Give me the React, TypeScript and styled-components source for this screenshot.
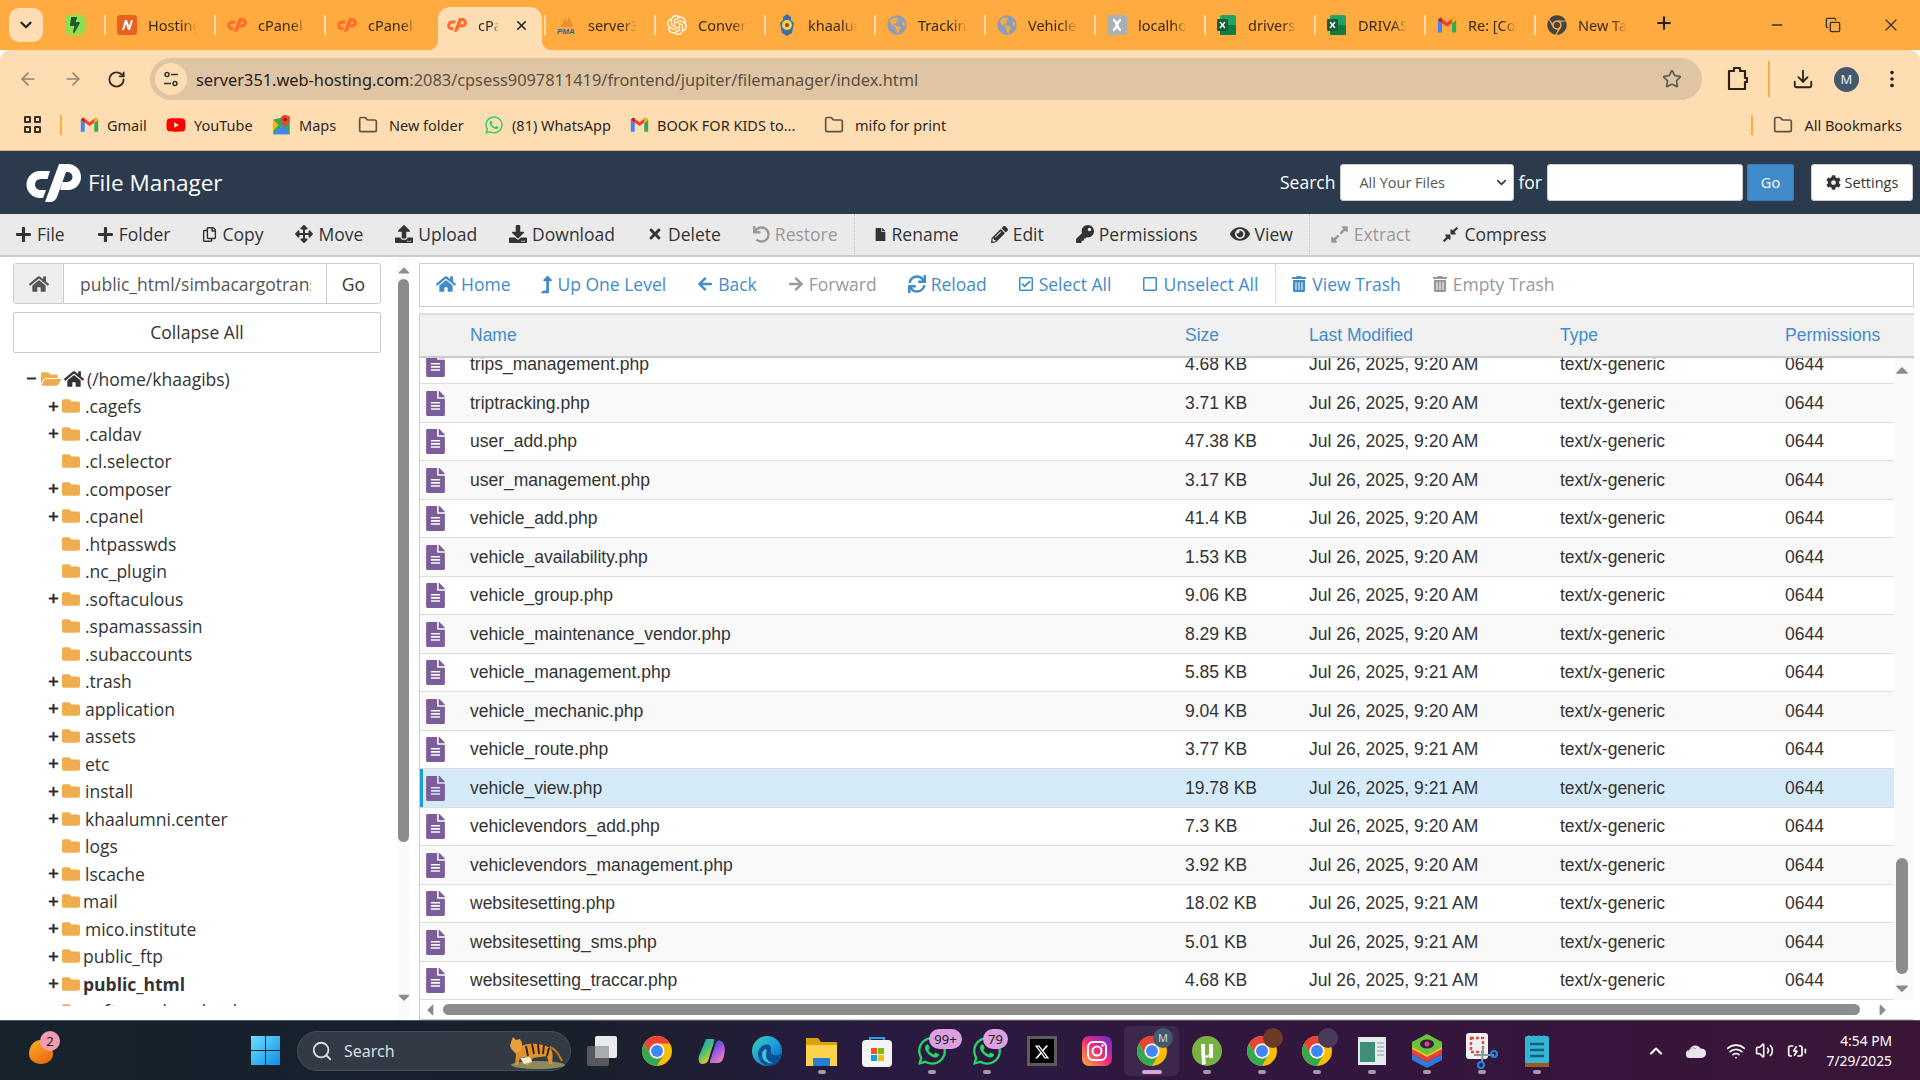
import { Fragment, ReactNode } from 'react';
import styled, { createGlobalStyle } from 'styled-components';
import {
    FaPlus, FaRegCopy, FaArrowsAlt, FaUpload, FaDownload, FaTimes, FaUndo, FaFile, FaPencilAlt, FaKey,
    FaEye, FaExpandAlt, FaCompressAlt, FaHome, FaLevelUpAlt, FaArrowLeft, FaArrowRight, FaSync,
    FaRegCheckSquare, FaRegSquare, FaTrashAlt, FaCog, FaFileAlt, FaFolder, FaFolderOpen, FaGlobeAmericas,
    FaChrome, FaWhatsapp, FaYoutube, FaBolt, FaCaretUp, FaCaretDown, FaCaretLeft, FaCaretRight,
} from 'react-icons/fa';
import { FaXTwitter } from 'react-icons/fa6';
import { SiOpenai } from 'react-icons/si';
import {
    ChevronDown, ChevronUp, ArrowLeft, ArrowRight, RotateCw, Star, Download, MoreVertical, Minus, X, Plus,
    Folder, Search, Wifi, Volume2, BatteryCharging, Copy as CopyIcon,
} from 'lucide-react';

//== data ==//
const OPEN = '"Open Sans", "Noto Sans", sans-serif';
const UI = '"Noto Sans", "Open Sans", sans-serif';
const ARIAL = '"Liberation Sans", Arial, sans-serif';

const files = [
    ['trips_management.php', '4.68 KB', '9:20'],
    ['triptracking.php', '3.71 KB', '9:20'],
    ['user_add.php', '47.38 KB', '9:20'],
    ['user_management.php', '3.17 KB', '9:20'],
    ['vehicle_add.php', '41.4 KB', '9:20'],
    ['vehicle_availability.php', '1.53 KB', '9:20'],
    ['vehicle_group.php', '9.06 KB', '9:20'],
    ['vehicle_maintenance_vendor.php', '8.29 KB', '9:20'],
    ['vehicle_management.php', '5.85 KB', '9:21'],
    ['vehicle_mechanic.php', '9.04 KB', '9:20'],
    ['vehicle_route.php', '3.77 KB', '9:21'],
    ['vehicle_view.php', '19.78 KB', '9:21'],
    ['vehiclevendors_add.php', '7.3 KB', '9:20'],
    ['vehiclevendors_management.php', '3.92 KB', '9:20'],
    ['websitesetting.php', '18.02 KB', '9:21'],
    ['websitesetting_sms.php', '5.01 KB', '9:21'],
    ['websitesetting_traccar.php', '4.68 KB', '9:21'],
];

const folders: [string, boolean, boolean?, boolean?][] = [
    ['.cagefs', true],
    ['.caldav', true],
    ['.cl.selector', false],
    ['.composer', true],
    ['.cpanel', true],
    ['.htpasswds', false],
    ['.nc_plugin', false],
    ['.softaculous', true],
    ['.spamassassin', false],
    ['.subaccounts', false],
    ['.trash', true],
    ['application', true],
    ['assets', true],
    ['etc', true],
    ['install', true],
    ['khaalumni.center', true],
    ['logs', false],
    ['lscache', true],
    ['mail', true, true],
    ['mico.institute', true],
    ['public_ftp', true, true],
    ['public_html', true, true, true],
    ['softwaredownload', true],
];

//== style ==//
const Global = createGlobalStyle`
    html, body { margin: 0; width: 1920px; height: 1080px; overflow: hidden; background: #fff; }
    * { box-sizing: border-box; }
`;

const Screen = styled.div`
    width: 1920px;
    height: 1080px;
    display: flex;
    flex-direction: column;
    overflow: hidden;
    font-family: ${OPEN};
    color: #333;
`;

// spacing around a single glyph in a row
const Spaced = styled.span<{ $ml?: number; $mr?: number; $mt?: number }>`
    display: flex;
    flex: none;
    margin: ${p => p.$mt || 0}px ${p => p.$mr || 0}px 0 ${p => p.$ml || 0}px;
`;

const TabStrip = styled.div`
    height: 50px;
    flex: none;
    background: #ffab40;
    display: flex;
    align-items: flex-end;
    padding-left: 9px;
`;

const TabMenu = styled.div`
    width: 34px;
    height: 34px;
    margin-bottom: 8px;
    border-radius: 10px;
    background: #ffddb3;
    display: flex;
    align-items: center;
    justify-content: center;
    color: #222;
`;

const PinnedTab = styled.div`
    width: 61px;
    height: 50px;
    padding: 15px 0 0 22px;
    position: relative;
`;

const PinnedGlyph = styled(FaBolt)`
    color: #1d5b2c;
    background: #8ee04e;
    border-radius: 5px;
    padding: 2px;
`;

const Tab = styled.div<{ $active?: boolean }>`
    width: ${p => p.$active ? 104 : 110}px;
    height: 43px;
    flex: none;
    margin: ${p => p.$active ? '0 2px 0 4px' : '0'};
    display: flex;
    align-items: center;
    padding: 0 0 7px ${p => p.$active ? 9 : 13}px;
    gap: 11px;
    position: relative;
    font-family: ${UI};
    font-size: 14.5px;
    color: #3a2a14;
    background: ${p => p.$active ? '#ffddb3' : 'transparent'};
    border-radius: ${p => p.$active ? '12px 12px 0 0' : '0'};

    &:before {
        content: '';
        position: absolute;
        ${p => p.$active ? `
            left: -10px;
            bottom: 0;
            width: 10px;
            height: 10px;
            background: radial-gradient(circle at 0 0, transparent 10px, #ffddb3 10.5px);
        ` : `
            left: 0;
            top: 8px;
            height: 20px;
            border-left: 2px solid #ffd9a6;
        `}
    }

    ${p => p.$active && `
        &:after {
            content: '';
            position: absolute;
            right: -10px;
            bottom: 0;
            width: 10px;
            height: 10px;
            background: radial-gradient(circle at 100% 0, transparent 10px, #ffddb3 10.5px);
        }
    `}
`;

const TabTitle = styled.span<{ $width: number }>`
    width: ${p => p.$width}px;
    overflow: hidden;
    white-space: nowrap;
    mask-image: linear-gradient(90deg, #000 70%, transparent);
`;

const NewTab = styled.div`
    width: 32px;
    height: 43px;
    padding: 6px 0 0 10px;
    color: #222;
`;

const WindowButtons = styled.div`
    margin-left: auto;
    height: 50px;
    display: flex;
    align-items: center;
    gap: 40px;
    padding-right: 19px;
    color: #333;
`;

const AddressRow = styled.div`
    height: 50px;
    flex: none;
    background: #ffddb3;
    border-radius: 10px 10px 0 0;
    display: flex;
    align-items: center;
    padding: 8px 0 0 18px;
    color: #47392a;
`;

const NavGlyph = styled.span<{ $dim?: boolean }>`
    width: 44.5px;
    display: flex;
    color: ${p => p.$dim ? '#8f8474' : '#3b3026'};
`;

const Omnibox = styled.div`
    width: 1552px;
    height: 42px;
    margin-left: -1.500px;
    border-radius: 21px;
    background: #dfc5a3;
    display: flex;
    align-items: center;
    padding-left: 5px;
`;

const SiteBadge = styled.span`
    width: 32px;
    height: 32px;
    border-radius: 50%;
    background: #ffddb3;
    display: flex;
    align-items: center;
    justify-content: center;
    margin-right: 9px;
    color: #333;
`;

const Url = styled.div`
    flex: 1;
    padding-top: 1px;
    font-family: ${UI};
    font-size: 16.35px;
    color: #5c5040;
    white-space: nowrap;

    b { font-weight: 400; color: #26201a; }
`;

const ToolGlyphs = styled.div`
    flex: 1;
    display: flex;
    align-items: center;
    padding-left: 24px;
    color: #2a2219;
`;

const Avatar = styled.span`
    width: 25px;
    height: 25px;
    border-radius: 50%;
    background: #44596b;
    color: #e8eef2;
    font-family: ${UI};
    font-size: 13px;
    display: flex;
    align-items: center;
    justify-content: center;
`;

const VBar = styled.span<{ $h: number; $mx?: string }>`
    width: 2px;
    height: ${p => p.$h}px;
    background: #ffab40;
    margin: ${p => p.$mx || '0'};
    flex: none;
`;

const BookmarkRow = styled.div`
    height: 51px;
    flex: none;
    background: #ffddb3;
    display: flex;
    align-items: center;
    padding: 0 18px 1px 24px;
    font-family: ${UI};
    font-size: 14.5px;
    color: #2f261b;
    border-bottom: 1px solid #cdb48f;
`;

const Bookmark = styled.div<{ $w?: number; $gap?: number; $ml?: number }>`
    width: ${p => p.$w ? `${p.$w}px` : 'auto'};
    margin-left: ${p => p.$ml || 0}px;
    flex: none;
    display: flex;
    align-items: center;
    gap: ${p => p.$gap || 8}px;
    white-space: nowrap;
`;

const AppsGrid = styled.div`
    width: 17px;
    height: 17px;
    display: grid;
    grid-template-columns: 7px 7px;
    gap: 3px;
    span { border: 2px solid #3b3026; border-radius: 1px; }
`;

const PageHeader = styled.header`
    height: 63px;
    flex: none;
    background: #2b3b4d;
    color: #fff;
    display: flex;
    align-items: center;
    padding: 0 7px 0 26px;
`;

const Brand = styled.div`
    display: flex;
    align-items: center;
    gap: 7px;
    font-size: 22.5px;
    flex: 1;
`;

const SearchLabel = styled.span<{ $ml: number; $mr: number }>`
    font-size: 17.5px;
    margin: -2px ${p => p.$mr}px 0 ${p => p.$ml}px;
`;

const SelectBox = styled.div`
    width: 174px;
    height: 37px;
    background: #fff;
    border: 1px solid #ccc;
    border-radius: 3px;
    color: #555;
    font-size: 14.5px;
    display: flex;
    align-items: center;
    justify-content: space-between;
    padding: 0 4px 0 18px;
`;

const SearchInput = styled.div`
    width: 196px;
    height: 37px;
    background: #fff;
    border: 1px solid #ccc;
    border-radius: 3px;
`;

const GoButton = styled.div`
    width: 47px;
    height: 37px;
    margin: 0 17px 0 4px;
    background: #428bca;
    border: 1px solid #357ebd;
    border-radius: 2px;
    font-size: 14.5px;
    display: flex;
    align-items: center;
    justify-content: center;
`;

const SettingsButton = styled.div`
    width: 102px;
    height: 37px;
    background: #fff;
    border: 1px solid #ccc;
    border-radius: 3px;
    color: #333;
    font-size: 14.5px;
    display: flex;
    align-items: center;
    justify-content: center;
    gap: 4px;
`;

const ActionBar = styled.nav`
    height: 43px;
    flex: none;
    background: #eaeaea;
    border-bottom: 2px solid #ccc;
    display: flex;
    align-items: center;
    padding: 0 0 1px 15px;
    font-size: 17.5px;
`;

const Action = styled.div<{ $off?: boolean; $blue?: boolean }>`
    display: flex;
    align-items: center;
    gap: 5px;
    margin-right: ${p => p.$blue ? 31 : 32}px;
    white-space: nowrap;
    color: ${p => p.$off ? '#999' : p.$blue ? '#428bca' : '#333'};
`;

const Divider = styled.span<{ $ml: number; $mr: number }>`
    align-self: stretch;
    border-left: 1px dotted #c4c4c4;
    margin: 0 ${p => p.$mr}px 0 ${p => p.$ml}px;
`;

const LevelUpGlyph = styled(FaLevelUpAlt)`
    width: 11px;
    height: 19px;
`;

const Workspace = styled.main`
    flex: 1;
    min-height: 0;
    display: flex;
    background: #fff;
`;

const Sidebar = styled.aside`
    width: 419px;
    flex: none;
    display: flex;
    background: #fff;
`;

const SideColumn = styled.div`
    width: 398px;
    padding: 6px 0 0 13px;
    display: flex;
    flex-direction: column;
`;

const PathGroup = styled.div`
    width: 368px;
    height: 41px;
    flex: none;
    display: flex;
    border: 1px solid #ccc;
    border-radius: 3px;
    font-size: 17.5px;
`;

const PathHome = styled.div`
    width: 50px;
    background: #eee;
    border-right: 1px solid #ccc;
    display: flex;
    align-items: center;
    justify-content: center;
    color: #555;
`;

const PathInput = styled.div`
    width: 263px;
    padding: 0 16px;
    color: #555;
    line-height: 40px;
    overflow: hidden;
    white-space: nowrap;
    border-right: 1px solid #ccc;

    span { display: block; width: 231px; overflow: hidden; }
`;

const PathGo = styled.div`
    flex: 1;
    text-align: center;
    line-height: 40px;
`;

const CollapseButton = styled.div`
    width: 368px;
    height: 41px;
    flex: none;
    margin-top: 8px;
    border: 1px solid #ccc;
    border-radius: 2px;
    font-size: 17.5px;
    text-align: center;
    line-height: 38px;
`;

const Tree = styled.div`
    height: 641px;
    margin-top: 12px;
    overflow: hidden;
    font-size: 17.5px;
`;

const TreeRow = styled.div<{ $bold?: boolean }>`
    height: 27.5px;
    display: flex;
    align-items: center;
    font-weight: ${p => p.$bold ? 700 : 400};
    white-space: nowrap;
    color: #333;
`;

const Expander = styled.span`
    width: 49px;
    padding-left: 35px;
    display: flex;
    flex: none;
    color: #2c2c2c;
`;

const FolderGlyph = styled(FaFolder)`
    color: #f0ad4e;
    flex: none;
`;

const TreeLabel = styled.span<{ $tight?: boolean }>`
    margin-left: ${p => p.$tight ? 3 : 5}px;
`;

const RootRow = styled(TreeRow)`
    padding-left: 12px;
    gap: 3px;
`;

const VScroll = styled.div<{ $top: number; $bottom: number; $width: number; $pr?: number }>`
    width: ${p => p.$width}px;
    flex: none;
    display: flex;
    flex-direction: column;
    align-items: center;
    justify-content: space-between;
    padding: ${p => p.$top}px ${p => p.$pr || 0}px ${p => p.$bottom}px 0;
    color: #8c8c8c;
    background: #fafafa;
`;

const VThumb = styled.div<{ $mt: number; $h: number; $w?: number }>`
    width: ${p => p.$w || 11}px;
    height: ${p => p.$h}px;
    margin-top: ${p => p.$mt}px;
    margin-bottom: auto;
    border-radius: 6px;
    background: #8c8c8c;
`;

const FilePane = styled.section`
    width: 1495px;
    flex: none;
    padding-top: 6px;
    display: flex;
    flex-direction: column;
`;

const NavBar = styled.nav`
    height: 44px;
    flex: none;
    border: 1px solid #ccc;
    display: flex;
    align-items: center;
    padding: 0 0 2px 16px;
    font-size: 17.5px;
`;

const TableBox = styled.div`
    margin-top: 6px;
    flex: 1;
    min-height: 0;
    border: 1px solid #ccc;
    border-top: 2px solid #ddd;
    border-right: 0;
    display: flex;
    flex-direction: column;
`;

const Cols = styled.div`
    display: grid;
    grid-template-columns: 50px 715px 124px 251px 225px 1fr;
    align-items: center;
`;

const HeadRow = styled(Cols)`
    height: 43px;
    flex: none;
    background: #f1f1f1;
    border-bottom: 2px solid #ccc;
    color: #428bca;
    font-family: ${ARIAL};
    font-size: 17.5px;
`;

const TableMiddle = styled.div`
    height: 642px;
    flex: none;
    display: flex;
    overflow: hidden;
`;

const Rows = styled.div`
    width: 1474px;
    flex: none;
    overflow: hidden;
`;

const RowsInner = styled.div`
    margin-top: -12.25px;
`;

const FileRow = styled(Cols)<{ $alt: boolean; $selected: boolean }>`
    height: 38.5px;
    font-family: ${ARIAL};
    font-size: 17.5px;
    color: #333;
    border-bottom: 1.5px solid #ddd;
    background: ${p => p.$selected ? '#d6ebf9' : p.$alt ? '#f9f9f9' : '#fff'};
    box-shadow: ${p => p.$selected ? 'inset 3px 0 0 #1a9fd9' : 'none'};
    white-space: nowrap;
`;

const FileGlyph = styled(FaFileAlt)`
    color: #7c5d99;
    margin-left: 3px;
`;

const HScroll = styled.div`
    height: 15px;
    flex: none;
    margin-top: 2px;
    display: flex;
    align-items: center;
    color: #8c8c8c;
    padding-left: 1px;
`;

const HThumb = styled.div`
    width: 1417px;
    height: 11px;
    margin: 0 14px 0 4px;
    border-radius: 6px;
    background: #8c8c8c;
`;

const Taskbar = styled.footer`
    height: 60px;
    flex: none;
    border-top: 1px solid #555;
    background: linear-gradient(90deg, #17222d 0%, #18202c 30%, #2a1a40 46%, #33163d 70%, #3a1538 100%);
    display: flex;
    align-items: center;
    padding-left: 29px;
    color: #fff;
    position: relative;
`;

const Widget = styled.div`
    width: 24px;
    height: 24px;
    margin: 3px 198px 0 0;
    border-radius: 50% 50% 50% 50% / 60% 60% 45% 45%;
    background: linear-gradient(150deg, #f5b324, #ee5f0c);
    position: relative;
`;

const CountBadge = styled.span<{ $bg: string; $w: number; $r: number; $t: number }>`
    position: absolute;
    top: ${p => p.$t}px;
    right: ${p => p.$r}px;
    min-width: ${p => p.$w}px;
    height: 20px;
    border-radius: 10px;
    background: ${p => p.$bg};
    color: #1c1c1c;
    font-family: ${UI};
    font-size: 13px;
    line-height: 20px;
    text-align: center;
`;

const SearchPill = styled.div`
    width: 274px;
    height: 40px;
    margin-left: 17px;
    border-radius: 20px;
    background: #323b45;
    border: 1px solid #454d57;
    display: flex;
    align-items: center;
    padding-left: 13px;
    gap: 11px;
    font-family: ${UI};
    font-size: 16px;
    color: #d8dde2;
`;

const TigerSlot = styled.span`
    display: flex;
    margin: 0 5px 0 auto;
`;

const TaskSlot = styled.div<{ $active?: boolean; $mark?: boolean }>`
    width: 55px;
    height: 50px;
    flex: none;
    display: flex;
    align-items: center;
    justify-content: center;
    position: relative;
    border-radius: 6px;
    background: ${p => p.$active ? 'rgba(255,255,255,.07)' : 'transparent'};

    &:after {
        display: ${p => p.$mark || p.$active ? 'block' : 'none'};
        content: '';
        position: absolute;
        bottom: 2px;
        left: 50%;
        transform: translateX(-50%);
        width: ${p => p.$active ? 20 : 8}px;
        height: 4px;
        border-radius: 2px;
        background: ${p => p.$active ? '#dba0e0' : '#a29aa6'};
    }
`;

const TaskIcons = styled.div`
    display: flex;
    align-items: center;
    margin-left: 3px;
`;

const Tray = styled.div`
    display: flex;
    align-items: center;
    margin-left: 82px;
    color: #fff;
`;

const Clock = styled.div`
    margin-left: 5px;
    font-family: ${UI};
    font-size: 13.8px;
    line-height: 20px;
    text-align: right;
    width: 80px;
    white-space: nowrap;
`;

const OverAvatar = styled.span<{ $bg: string }>`
    position: absolute;
    top: 2px;
    right: 6px;
    width: 20px;
    height: 20px;
    border-radius: 50%;
    background: ${p => p.$bg};
    color: #cfd6da;
    font-family: ${UI};
    font-size: 11px;
    line-height: 20px;
    text-align: center;
`;

//== icons ==//
const LogoSvg = styled.svg`
    flex: none;
`;

const CpLogo = ({ width, color }: { width: number; color: string }) => (
    <LogoSvg width={width} height={width * 38 / 55} viewBox="0 0 55 38">
        <path fill={color} d="M24 7H14A13.500 13.500 0 0 0 14 34H17L20 26H14.500A5.500 5.500 0 0 1 14.500 15H21.500Z" />
        <path fill={color} d="M33 0H42A13 13 0 0 1 42 26H34L36.500 18H41.500A5 5 0 0 0 41.500 8H40L31 33Q29 38 24 38H19Z" />
    </LogoSvg>
);

const ChromeLogo = ({ size = 20 }: { size?: number }) => (
    <svg width={size} height={size} viewBox="4 4 40 40">
        <circle cx="24" cy="24" r="20" fill="#fbbc04" />
        <path fill="#ea4335" d="M24 4A20 20 0 0 1 41.32 14H24A10 10 0 0 0 15.34 29L6.68 14A20 20 0 0 1 24 4Z" />
        <path fill="#34a853" d="M6.68 14L15.34 29A10 10 0 0 0 32.66 29L24 44A20 20 0 0 1 6.68 14Z" />
        <circle cx="24" cy="24" r="10" fill="#fff" />
        <circle cx="24" cy="24" r="8" fill="#4285f4" />
    </svg>
);

const GmailLogo = ({ size = 19 }: { size?: number }) => (
    <svg width={size} height={size} viewBox="0 0 24 24">
        <path fill="#4285f4" d="M1 6v15h5V10z" />
        <path fill="#34a853" d="M18 10v11h5V6z" />
        <path fill="#ea4335" d="M1 6l11 8 11-8-3-3-8 6-8-6-3 3z" />
        <path fill="#fbbc04" d="M18 5l2-2 3 3-5 4z" />
        <path fill="#c5221f" d="M1 6l3-3 2 2v5z" />
    </svg>
);

const MapsLogo = () => (
    <svg width="19" height="22" viewBox="0 0 20 24">
        <path fill="#34a853" d="M1 6l18-4v20L1 22z" />
        <path fill="#4285f4" d="M1 22l10-10 8 10z" />
        <path fill="#fbbc04" d="M1 6l6 6-6 6z" />
        <path fill="#ea4335" d="M14 1a5 5 0 0 0-5 5c0 3.500 5 8 5 8s5-4.500 5-8a5 5 0 0 0-5-5z" />
        <circle cx="14" cy="6" r="1.800" fill="#8e1f16" />
    </svg>
);

const ExcelLogo = () => (
    <svg width="20" height="20" viewBox="0 0 20 20">
        <rect x="3" y="0" width="16" height="20" rx="2" fill="#21a366" />
        <rect x="3" y="10" width="16" height="10" rx="1" fill="#107c41" />
        <rect x="0" y="4" width="11" height="12" rx="1" fill="#185c37" />
        <path d="M3 7l5 6M8 7l-5 6" stroke="#fff" strokeWidth="1.400" />
    </svg>
);

const NamecheapIcon = () => (
    <svg width="20" height="20" viewBox="0 0 20 20">
        <rect width="20" height="20" rx="3" fill="#e8611f" />
        <path d="M5 15l3-10h2l2 6 2-6h2l-3 10h-2l-2-6-2 6z" fill="#fff" />
    </svg>
);

const PmaIcon = () => (
    <svg width="20" height="20" viewBox="0 0 20 20">
        <path d="M4 12l4-9 2 5 2-7 4 11z" fill="#f08c2e" />
        <text x="0" y="19" fontSize="8" fontWeight="700" fontStyle="italic" fill="#2e5f9e" fontFamily="Liberation Sans">PMA</text>
    </svg>
);

const CrestIcon = () => (
    <svg width="20" height="22" viewBox="0 0 20 22">
        <path d="M10 0l4 3v3l3 3-2 10-5 3-5-3-2-10 3-3V3z" fill="#3d6fa8" />
        <circle cx="10" cy="11" r="5" fill="#f2d34a" />
        <circle cx="10" cy="11" r="2" fill="#a33a2a" />
    </svg>
);

const XamppIcon = () => (
    <svg width="20" height="20" viewBox="0 0 20 20">
        <rect width="20" height="20" rx="3" fill="#aab0b4" />
        <path d="M6 5c4 0 4 10 8 10M14 5c-4 0-4 10-8 10" stroke="#fff" strokeWidth="2.500" fill="none" />
    </svg>
);

const SitePrefs = () => (
    <svg width="18" height="18" viewBox="0 0 18 18" fill="none" stroke="#333" strokeWidth="1.500">
        <circle cx="5" cy="4.500" r="2" />
        <path d="M9 4.500h7M2 13.500h7" />
        <circle cx="13" cy="13.500" r="2" />
    </svg>
);

const ExtensionGlyph = () => (
    <svg width="22" height="26" viewBox="0 0 22 26" fill="none" stroke="#2a2219" strokeWidth="2.200">
        <path d="M3 5h5V2h6v3h5v7h2v4h-2v7H3z" strokeLinejoin="round" />
    </svg>
);

const WindowsLogo = () => (
    <svg width="29" height="29" viewBox="0 0 29 29">
        <defs>
            <linearGradient id="win" x1="0" y1="0" x2="1" y2="1">
                <stop offset="0" stopColor="#6ce0fb" />
                <stop offset="1" stopColor="#0f8fe8" />
            </linearGradient>
        </defs>
        <path fill="url(#win)" d="M0 0h14v14H0zM15 0h14v14H15zM0 15h14v14H0zM15 15h14v14H15z" />
    </svg>
);

const Tiger = () => (
    <svg width="57" height="38" viewBox="0 0 57 38">
        <ellipse cx="30" cy="33" rx="27" ry="4" fill="#8d8a5c" />
        <path d="M10 16c6-5 22-6 32 0 3 3 3 8 2 16h-3l-2-8-14 2-4 7h-3l-1-8-5 1-2 7H7l1-11-3-3z" fill="#e2902a" />
        <path d="M3 10l2-5 3 3 4-1 2 4 0 5-4 5-6-3-2-4z" fill="#e8a13b" />
        <path d="M42 15c6 2 9 8 12 14" stroke="#c9771d" strokeWidth="2" fill="none" />
        <path d="M18 14l2 10M24 12l2 10M30 12l1 10M36 13l-1 9M41 16l-2 8" stroke="#2a1c10" strokeWidth="1.800" />
        <path d="M12 26l10-1 2 5-8 2z" fill="#f4ead8" />
    </svg>
);

const TaskView = () => (
    <svg width="30" height="30" viewBox="0 0 30 30">
        <rect x="0" y="10" width="22" height="20" rx="2" fill="#57595c" />
        <rect x="8" y="0" width="22" height="22" rx="2" fill="#e9eaec" />
        <rect x="8" y="10" width="14" height="12" fill="#a9abae" />
    </svg>
);

const Copilot = () => (
    <svg width="30" height="30" viewBox="0 0 30 30">
        <defs>
            <linearGradient id="cpa" x1="0" y1="0" x2=".6" y2="1">
                <stop offset="0" stopColor="#1f8fe8" />
                <stop offset=".5" stopColor="#3fc07a" />
                <stop offset="1" stopColor="#f7c81e" />
            </linearGradient>
            <linearGradient id="cpb" x1=".2" y1="0" x2=".8" y2="1">
                <stop offset="0" stopColor="#1c4fd8" />
                <stop offset=".5" stopColor="#a65ae0" />
                <stop offset="1" stopColor="#f28aa8" />
            </linearGradient>
        </defs>
        <path fill="url(#cpb)" d="M13 27h8c3 0 5-3 6-7 1-4 2-12-3-15-2-2-5 0-6 4l-4 13c-1 2-1 5-1 5z" />
        <path fill="url(#cpa)" d="M9 3h7c2 0 1 3 0 6l-5 16c-1 2-3 3-6 3-3 0-4-4-3-8z" />
    </svg>
);

const EdgeLogo = () => (
    <svg width="30" height="30" viewBox="0 0 30 30">
        <defs>
            <linearGradient id="edg" x1="0" y1="0" x2="1" y2="1">
                <stop offset="0" stopColor="#36d6a8" />
                <stop offset=".5" stopColor="#1b9de2" />
                <stop offset="1" stopColor="#0c59a4" />
            </linearGradient>
        </defs>
        <circle cx="15" cy="15" r="15" fill="url(#edg)" />
        <path d="M30 17c-2 3-8 3-10 1-3-3 1-7-3-9-5-2-11 3-11 9 0 6 5 12 12 12 6 0 11-5 12-13z" fill="#0f4f96" />
        <path d="M14 13c-4 1-5 6-3 10 2 3 6 5 10 4-4-1-7-4-7-7 0-2 1-5 0-7z" fill="#3cc8d8" />
    </svg>
);

const ExplorerLogo = () => (
    <svg width="31" height="30" viewBox="0 0 31 30">
        <path d="M0 2h12l3 4h16v24H0z" fill="#d9a20b" />
        <path d="M0 9h31v21H0z" fill="#fcd34d" />
        <rect x="7" y="22" width="17" height="8" rx="1" fill="#1f7fd4" />
    </svg>
);

const StoreLogo = () => (
    <svg width="30" height="32" viewBox="0 0 30 32">
        <path d="M8 7V3h14v4" fill="none" stroke="#27a2e8" strokeWidth="2" />
        <rect y="5" width="30" height="27" rx="4" fill="#f4f4f4" />
        <rect x="9" y="13" width="6" height="6" fill="#f25022" />
        <rect x="16" y="13" width="6" height="6" fill="#7fba00" />
        <rect x="9" y="20" width="6" height="6" fill="#00a4ef" />
        <rect x="16" y="20" width="6" height="6" fill="#ffb900" />
    </svg>
);

const InstaLogo = () => (
    <svg width="30" height="30" viewBox="0 0 30 30">
        <defs>
            <linearGradient id="ig" x1="0" y1="1" x2="1" y2="0">
                <stop offset="0" stopColor="#fdb131" />
                <stop offset=".5" stopColor="#ee2a7b" />
                <stop offset="1" stopColor="#6228d7" />
            </linearGradient>
        </defs>
        <rect width="30" height="30" rx="7" fill="url(#ig)" />
        <rect x="6" y="6" width="18" height="18" rx="5" fill="none" stroke="#fff" strokeWidth="2" />
        <circle cx="15" cy="15" r="4.500" fill="none" stroke="#fff" strokeWidth="2" />
        <circle cx="20.500" cy="9.500" r="1.200" fill="#fff" />
    </svg>
);

const TorrentLogo = () => (
    <svg width="30" height="30" viewBox="0 0 30 30">
        <circle cx="15" cy="15" r="15" fill="#78b13f" />
        <path d="M9 8h4v10c0 2 3 2 4 0V8h4v14h-4v-2c-1 2-3 2-4 1l1 7-4 1z" fill="#fff" />
    </svg>
);

const PreviewLogo = () => (
    <svg width="28" height="28" viewBox="0 0 28 28">
        <rect width="28" height="28" fill="#e6eaea" />
        <rect x="2" y="5" width="15" height="20" fill="#3f8f78" />
        <path d="M19 6h7M19 10h7M19 14h7M19 18h7" stroke="#aab5b3" strokeWidth="1.500" />
    </svg>
);

const BlueStacks = () => (
    <svg width="30" height="34" viewBox="0 0 30 34">
        <path d="M15 34L0 26v-6l15 8 15-8v6z" fill="#2c7bdc" />
        <path d="M15 28L0 20v-6l15 8 15-8v6z" fill="#e83d3d" />
        <path d="M15 23L0 15V9l15 8 15-8v6z" fill="#f7c325" />
        <path d="M15 0l15 8v5l-15 8L0 13V8z" fill="#6cc23a" />
        <ellipse cx="15" cy="10" rx="7" ry="4.500" fill="#33203f" />
        <circle cx="15" cy="10" r="2.500" fill="#d93f9c" />
    </svg>
);

const SnipLogo = () => (
    <svg width="32" height="36" viewBox="0 0 32 36">
        <rect width="22" height="26" rx="3" fill="#eef0f2" />
        <path d="M5 5h12v14H5z" fill="none" stroke="#dd4b39" strokeWidth="2.400" strokeDasharray="3 2" />
        <path d="M17 14l-1 16M8 22l20 0" stroke="#8f979d" strokeWidth="2" />
        <circle cx="15" cy="32" r="3" fill="none" stroke="#1c86e0" strokeWidth="2" />
        <circle cx="28" cy="21" r="3" fill="none" stroke="#1c86e0" strokeWidth="2" />
    </svg>
);

const NotepadLogo = () => (
    <svg width="24" height="32" viewBox="0 0 24 32">
        <rect y="1" width="24" height="28" rx="2" fill="#33b6d6" />
        <rect y="28" width="24" height="4" fill="#9c5a1e" />
        <path d="M4 1V0M9 1V0M14 1V0M19 1V0" stroke="#1a6e88" strokeWidth="2" />
        <path d="M5 9h14M5 15h14M5 21h14" stroke="#105e78" strokeWidth="2.400" />
    </svg>
);

const CloudLogo = () => (
    <svg width="20" height="14" viewBox="0 0 20 14">
        <path d="M4 14a4 4 0 0 1-.5-8 6 6 0 0 1 11-1.500A4.500 4.500 0 0 1 16 14z" fill="#e8e6ea" />
        <path d="M2 8a5 5 0 0 1 8-3" fill="none" stroke="#9f96a3" strokeWidth="1" />
    </svg>
);

function XBox() {
    return (
        <svg width="30" height="30" viewBox="0 0 30 30">
            <rect width="30" height="30" fill="#5c5c5c" />
            <rect x="3" y="3" width="24" height="24" fill="#000" />
            <foreignObject x="7" y="7" width="16" height="16"><FaXTwitter size={16} color="#fff" /></foreignObject>
        </svg>
    );
}

//== component ==//
const tabs: { icon: ReactNode; title: string; active?: boolean }[] = [
    { icon: <NamecheapIcon />, title: 'Hosting' },
    { icon: <CpLogo width={20} color="#ff6c2c" />, title: 'cPanel - ' },
    { icon: <CpLogo width={20} color="#ff6c2c" />, title: 'cPanel F' },
    { icon: <CpLogo width={20} color="#ff6c2c" />, title: 'cPa', active: true },
    { icon: <PmaIcon />, title: 'server351' },
    { icon: <SiOpenai size={20} color="#fff" />, title: 'Convers' },
    { icon: <CrestIcon />, title: 'khaalun' },
    { icon: <FaGlobeAmericas size={20} color="#8e9db5" />, title: 'Tracking' },
    { icon: <FaGlobeAmericas size={20} color="#8e9db5" />, title: 'Vehicle' },
    { icon: <XamppIcon />, title: 'localhost' },
    { icon: <ExcelLogo />, title: 'drivers_' },
    { icon: <ExcelLogo />, title: 'DRIVAS' },
    { icon: <GmailLogo size={20} />, title: 'Re: [Coc' },
    { icon: <FaChrome size={20} color="#444" />, title: 'New Tab' },
];

const actions: { icon: ReactNode; label: string; off?: boolean; split?: [number, number] }[] = [
    { icon: <FaPlus size={17} />, label: 'File' },
    { icon: <FaPlus size={17} />, label: 'Folder' },
    { icon: <FaRegCopy size={15} />, label: 'Copy' },
    { icon: <FaArrowsAlt size={18} />, label: 'Move' },
    { icon: <FaUpload size={18} />, label: 'Upload' },
    { icon: <FaDownload size={18} />, label: 'Download' },
    { icon: <FaTimes size={16} />, label: 'Delete' },
    { icon: <FaUndo size={17} />, label: 'Restore', off: true, split: [-16, 19] },
    { icon: <FaFile size={13} />, label: 'Rename' },
    { icon: <FaPencilAlt size={17} />, label: 'Edit' },
    { icon: <FaKey size={18} />, label: 'Permissions' },
    { icon: <FaEye size={20} />, label: 'View', split: [-16, 20] },
    { icon: <FaExpandAlt size={19} />, label: 'Extract', off: true },
    { icon: <FaCompressAlt size={17} />, label: 'Compress' },
];

const navItems: { icon: ReactNode; label: string; off?: boolean; split?: [number, number] }[] = [
    { icon: <FaHome size={20} />, label: 'Home' },
    { icon: <LevelUpGlyph />, label: 'Up One Level' },
    { icon: <FaArrowLeft size={16} />, label: 'Back' },
    { icon: <FaArrowRight size={16} />, label: 'Forward', off: true },
    { icon: <FaSync size={18} />, label: 'Reload' },
    { icon: <FaRegCheckSquare size={16} />, label: 'Select All' },
    { icon: <FaRegSquare size={16} />, label: 'Unselect All', split: [-14, 15] },
    { icon: <FaTrashAlt size={16} />, label: 'View Trash' },
    { icon: <FaTrashAlt size={16} />, label: 'Empty Trash', off: true },
];

const taskApps: { icon: ReactNode; mark?: boolean; active?: boolean; extra?: ReactNode }[] = [
    { icon: <TaskView /> },
    { icon: <ChromeLogo size={30} /> },
    { icon: <Copilot /> },
    { icon: <EdgeLogo /> },
    { icon: <ExplorerLogo />, mark: true },
    { icon: <StoreLogo /> },
    { icon: <FaWhatsapp size={32} color="#25d366" />, mark: true, extra: <CountBadge $bg="#dba0e0" $w={33} $r={-3} $t={3}>99+</CountBadge> },
    { icon: <FaWhatsapp size={32} color="#25d366" />, mark: true, extra: <CountBadge $bg="#dba0e0" $w={25} $r={6} $t={3}>79</CountBadge> },
    { icon: <XBox /> },
    { icon: <InstaLogo /> },
    { icon: <ChromeLogo size={30} />, active: true, extra: <OverAvatar $bg="#44596b">M</OverAvatar> },
    { icon: <TorrentLogo />, mark: true },
    { icon: <ChromeLogo size={30} />, mark: true, extra: <OverAvatar $bg="#6e3a28" /> },
    { icon: <ChromeLogo size={30} />, mark: true, extra: <OverAvatar $bg="#4a3a5a" /> },
    { icon: <PreviewLogo />, mark: true },
    { icon: <BlueStacks />, mark: true },
    { icon: <SnipLogo />, mark: true },
    { icon: <NotepadLogo />, mark: true },
];

export default function App() {
    return (
        <Screen>
            <Global />
            <TabStrip>
                <TabMenu><ChevronDown size={18} strokeWidth={3} /></TabMenu>
                <PinnedTab><PinnedGlyph size={20} /></PinnedTab>
                {tabs.map(t => (
                    <Tab key={t.title} $active={t.active}>
                        {t.icon}
                        <TabTitle $width={t.active ? 21 : 49}>{t.title}</TabTitle>
                        {t.active && <Spaced $ml={4}><X size={15} strokeWidth={2.5} color="#222" /></Spaced>}
                    </Tab>
                ))}
                <NewTab><Plus size={20} strokeWidth={2.5} /></NewTab>
                <WindowButtons>
                    <Minus size={16} />
                    <CopyIcon size={16} />
                    <X size={20} strokeWidth={1.5} />
                </WindowButtons>
            </TabStrip>

            <AddressRow>
                <NavGlyph $dim><ArrowLeft size={20} /></NavGlyph>
                <NavGlyph $dim><ArrowRight size={20} /></NavGlyph>
                <NavGlyph><RotateCw size={19} strokeWidth={2.4} /></NavGlyph>
                <Omnibox>
                    <SiteBadge><SitePrefs /></SiteBadge>
                    <Url><b>server351.web-hosting.com</b>:2083/cpsess9097811419/frontend/jupiter/filemanager/index.html</Url>
                    <Spaced $mr={20}><Star size={20} color="#5f5a52" /></Spaced>
                </Omnibox>
                <ToolGlyphs>
                    <ExtensionGlyph />
                    <VBar $h={36} $mx="0 0 0 20px" />
                    <Spaced $ml={22} $mr={20}><Download size={22} /></Spaced>
                    <Avatar>M</Avatar>
                    <Spaced $ml={22}><MoreVertical size={22} /></Spaced>
                </ToolGlyphs>
            </AddressRow>

            <BookmarkRow>
                <AppsGrid><span /><span /><span /><span /></AppsGrid>
                <VBar $h={20} $mx="0 18px 0 19px" />
                <Bookmark $w={86}><GmailLogo />Gmail</Bookmark>
                <Bookmark $w={106}><FaYoutube size={20} color="#f00" />YouTube</Bookmark>
                <Bookmark $w={86}><MapsLogo />Maps</Bookmark>
                <Bookmark $w={126} $gap={11}><Folder size={20} color="#5b5347" />New folder</Bookmark>
                <Bookmark $w={146}><FaWhatsapp size={20} color="#25d366" />(81) WhatsApp</Bookmark>
                <Bookmark $w={194}><GmailLogo />BOOK FOR KIDS to...</Bookmark>
                <Bookmark $gap={11}><Folder size={20} color="#5b5347" />mifo for print</Bookmark>
                <VBar $h={20} $mx="0 0 0 auto" />
                <Bookmark $gap={11} $ml={20}><Folder size={20} color="#5b5347" />All Bookmarks</Bookmark>
            </BookmarkRow>

            <PageHeader>
                <Brand><CpLogo width={55} color="#fff" />File Manager</Brand>
                <SearchLabel $ml={0} $mr={5}>Search</SearchLabel>
                <SelectBox>All Your Files<ChevronDown size={15} color="#333" strokeWidth={2.5} /></SelectBox>
                <SearchLabel $ml={4} $mr={5}>for</SearchLabel>
                <SearchInput />
                <GoButton>Go</GoButton>
                <SettingsButton><FaCog size={15} />Settings</SettingsButton>
            </PageHeader>

            <ActionBar>
                {actions.map(a => (
                    <Fragment key={a.label}>
                        <Action $off={a.off}>{a.icon}{a.label}</Action>
                        {a.split && <Divider $ml={a.split[0]} $mr={a.split[1]} />}
                    </Fragment>
                ))}
            </ActionBar>

            <Workspace>
                <Sidebar>
                    <SideColumn>
                        <PathGroup>
                            <PathHome><FaHome size={20} /></PathHome>
                            <PathInput><span>public_html/simbacargotransport</span></PathInput>
                            <PathGo>Go</PathGo>
                        </PathGroup>
                        <CollapseButton>Collapse All</CollapseButton>
                        <Tree>
                            <RootRow>
                                <Minus size={13} strokeWidth={3.5} color="#2c2c2c" />
                                <FaFolderOpen size={20} color="#f0ad4e" />
                                <FaHome size={20} color="#333" />
                                <span>(/home/khaagibs)</span>
                            </RootRow>
                            {folders.map(([name, expandable, tight, bold]) => (
                                <TreeRow key={name} $bold={bold}>
                                    <Expander>{expandable && <FaPlus size={11} />}</Expander>
                                    <FolderGlyph size={18} />
                                    <TreeLabel $tight={tight}>{name}</TreeLabel>
                                </TreeRow>
                            ))}
                        </Tree>
                    </SideColumn>
                    <VScroll $top={4} $bottom={14} $width={11}>
                        <Spaced><FaCaretUp size={18} /></Spaced>
                        <VThumb $mt={0} $h={563} />
                        <Spaced><FaCaretDown size={18} /></Spaced>
                    </VScroll>
                </Sidebar>

                <FilePane>
                    <NavBar>
                        {navItems.map(n => (
                            <Fragment key={n.label}>
                                <Action $off={n.off} $blue>{n.icon}{n.label}</Action>
                                {n.split && <Divider $ml={n.split[0]} $mr={n.split[1]} />}
                            </Fragment>
                        ))}
                    </NavBar>
                    <TableBox>
                        <HeadRow>
                            <span />
                            <span>Name</span>
                            <span>Size</span>
                            <span>Last Modified</span>
                            <span>Type</span>
                            <span>Permissions</span>
                        </HeadRow>
                        <TableMiddle>
                            <Rows>
                                <RowsInner>
                                    {files.map(([name, size, time], i) => (
                                        <FileRow key={name} $alt={i % 2 === 1} $selected={name === 'vehicle_view.php'}>
                                            <FileGlyph size={25} />
                                            <span>{name}</span>
                                            <span>{size}</span>
                                            <span>Jul 26, 2025, {time} AM</span>
                                            <span>text/x-generic</span>
                                            <span>0644</span>
                                        </FileRow>
                                    ))}
                                </RowsInner>
                            </Rows>
                            <VScroll $top={0} $bottom={2} $width={20} $pr={4}>
                                <Spaced $mt={2}><FaCaretUp size={20} /></Spaced>
                                <VThumb $mt={478} $h={116} $w={12} />
                                <Spaced><FaCaretDown size={20} /></Spaced>
                            </VScroll>
                        </TableMiddle>
                        <HScroll>
                            <FaCaretLeft size={18} />
                            <HThumb />
                            <FaCaretRight size={18} />
                        </HScroll>
                    </TableBox>
                </FilePane>
            </Workspace>

            <Taskbar>
                <Widget><CountBadge $bg="#f59ab0" $w={20} $r={-7} $t={-9}>2</CountBadge></Widget>
                <WindowsLogo />
                <SearchPill><Search size={22} />Search<TigerSlot><Tiger /></TigerSlot></SearchPill>
                <TaskIcons>
                    {taskApps.map((t, i) => (
                        <TaskSlot key={i} $mark={t.mark} $active={t.active}>
                            {t.icon}
                            {t.extra}
                        </TaskSlot>
                    ))}
                </TaskIcons>
                <Tray>
                    <ChevronUp size={20} strokeWidth={2.5} />
                    <Spaced $ml={20}><CloudLogo /></Spaced>
                    <Spaced $ml={20}><Wifi size={20} /></Spaced>
                    <Spaced $ml={9}><Volume2 size={19} /></Spaced>
                    <Spaced $ml={13}><BatteryCharging size={20} /></Spaced>
                    <Clock>4:54 PM<br />7/29/2025</Clock>
                </Tray>
            </Taskbar>
        </Screen>
    );
}
